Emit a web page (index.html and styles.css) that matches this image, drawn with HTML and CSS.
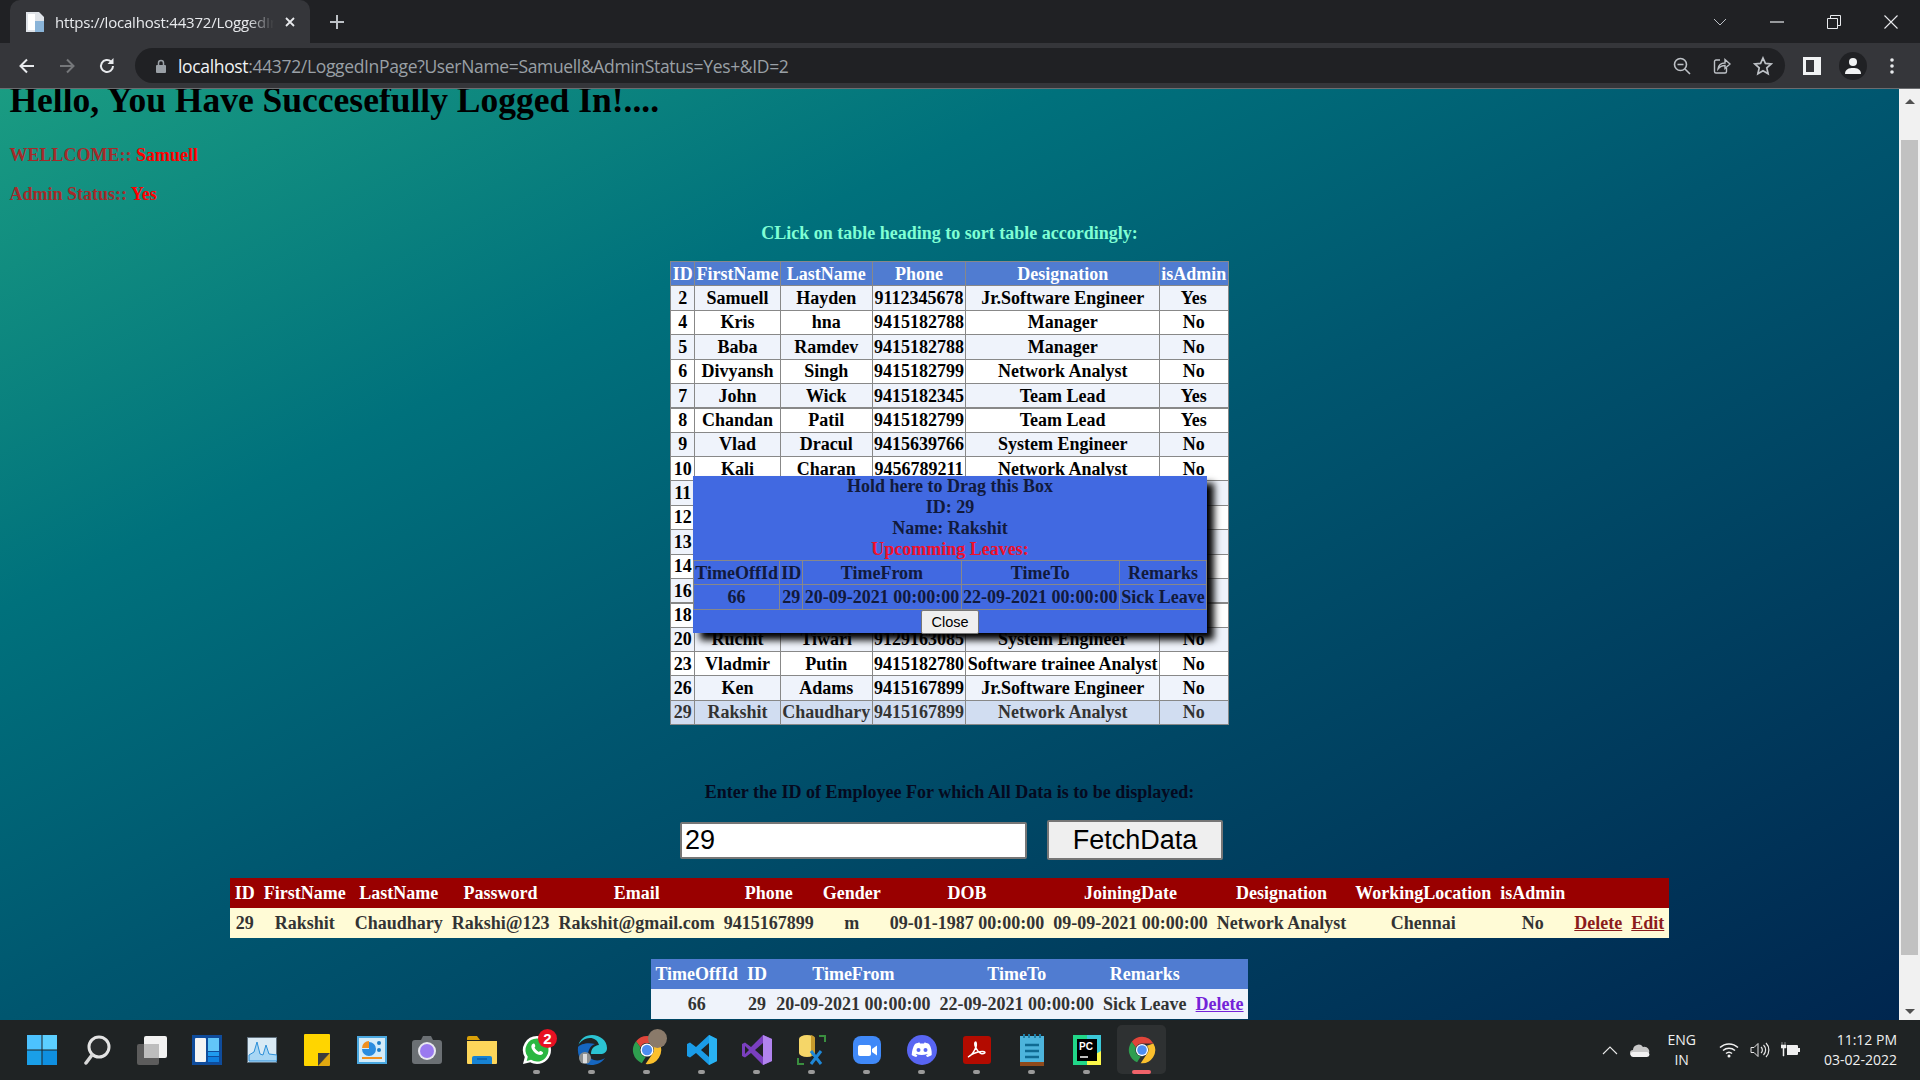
FILE: index.html
```html
<!DOCTYPE html>
<html lang="en">
<head>
  <meta charset="UTF-8" />
  <title>LoggedInPage</title>
  <link rel="stylesheet" href="styles.css">
</head>
<body>
  <svg class="defs" width="0" height="0">
    <symbol id="chrome" viewBox="0 0 32 32">
      <path d="M16 1a15 15 0 0 1 13 7.500H16a7.500 7.500 0 0 0-7 4.600L4.300 6.600A15 15 0 0 1 16 1z" fill="#e0453a"/>
      <path d="M4.300 6.600 9 13.100a7.500 7.500 0 0 0 5.600 10.300L10.400 30A15 15 0 0 1 4.300 6.600z" fill="#2e9e4f"/>
      <path d="M29 8.500A15 15 0 0 1 14.500 31L21.500 20.500A7.500 7.500 0 0 0 21.600 11z" fill="#fbc02d"/>
      <circle cx="16" cy="16" r="7" fill="#fff"/>
      <circle cx="16" cy="16" r="5.500" fill="#4d8df0"/>
    </symbol>
  </svg>

  <div class="tabstrip">
    <div class="tab">
      <svg class="favicon" width="20" height="20" viewBox="0 0 20 20"><path d="M1 0h13l5 5v15H1z" fill="#dfe3e8"/><path d="M10 9h9v11h-9z" fill="#8ab4d8"/><path d="M3 2h7v16H3z" fill="#fff"/></svg>
      <span class="tab-title">https://localhost:44372/LoggedInPage?UserName</span>
      <svg width="12" height="12" viewBox="0 0 12 12"><path d="M2 2l8 8M10 2l-8 8" stroke="#e8eaed" stroke-width="1.800"/></svg>
    </div>
    <svg class="newtab" width="14" height="14" viewBox="0 0 14 14"><path d="M7 0v14M0 7h14" stroke="#bdc1c6" stroke-width="2"/></svg>
    <div class="winbtns">
      <svg width="14" height="8" viewBox="0 0 14 8"><path d="M1 1l6 6 6-6" fill="none" stroke="#bdc1c6"/></svg>
      <svg width="14" height="2" viewBox="0 0 14 2"><path d="M0 1h14" stroke="#e8eaed" stroke-width="1.200"/></svg>
      <svg width="14" height="14" viewBox="0 0 14 14"><path d="M.5 3.500h10v10H.5zM3.500 3.500V.5h10v10h-3" fill="none" stroke="#e8eaed"/></svg>
      <svg width="14" height="14" viewBox="0 0 14 14"><path d="M.5.5l13 13M13.500.5l-13 13" stroke="#e8eaed" stroke-width="1.100"/></svg>
    </div>
  </div>

  <div class="toolbar">
    <svg class="navbtn" width="18" height="18" viewBox="0 0 18 18"><path d="M16 9H3M9 2.500L2.500 9 9 15.500" fill="none" stroke="#e8eaed" stroke-width="2"/></svg>
    <svg class="navbtn" width="18" height="18" viewBox="0 0 18 18"><path d="M2 9h13M9 2.500L15.500 9 9 15.500" fill="none" stroke="#75777a" stroke-width="2"/></svg>
    <svg class="navbtn" width="18" height="18" viewBox="0 0 18 18"><path d="M15 9a6 6 0 1 1-1.800-4.300" fill="none" stroke="#e8eaed" stroke-width="2"/><path d="M15.500 1v6h-6z" fill="#e8eaed"/></svg>
    <div class="omnibox">
      <svg width="12" height="14" viewBox="0 0 12 14"><rect x="1" y="6" width="10" height="8" rx="1" fill="#9aa0a6"/><path d="M3.500 6V4a2.500 2.500 0 0 1 5 0v2" fill="none" stroke="#9aa0a6" stroke-width="1.500"/></svg>
      <span class="url"><b>localhost</b>:44372/LoggedInPage?UserName=Samuell&amp;AdminStatus=Yes+&amp;ID=2</span>
      <svg class="push" width="18" height="18" viewBox="0 0 18 18"><circle cx="7.500" cy="7.500" r="6" fill="none" stroke="#bdc1c6" stroke-width="1.600"/><path d="M4.500 7.500h6M12 12l5 5" stroke="#bdc1c6" stroke-width="1.600"/></svg>
      <svg width="18" height="18" viewBox="0 0 18 18"><path d="M7 3H3a1.500 1.500 0 0 0-1.500 1.500v10A1.500 1.500 0 0 0 3 16h9a1.500 1.500 0 0 0 1.500-1.500V11" fill="none" stroke="#bdc1c6" stroke-width="1.400"/><path d="M5 12c.5-4 3-6 7-6V2.500L17 7l-5 4.500V8.500c-3 0-5 1-7 3.500z" fill="none" stroke="#bdc1c6" stroke-width="1.400"/></svg>
      <svg width="20" height="20" viewBox="0 0 20 20"><path d="M10 2l2.400 5.400 5.800.6-4.400 3.900 1.300 5.800L10 14.700l-5.100 3 1.300-5.800L1.800 8l5.800-.6z" fill="none" stroke="#bdc1c6" stroke-width="1.700"/></svg>
    </div>
    <svg class="sidepanel" width="18" height="18" viewBox="0 0 18 18"><path d="M0 0h18v18H0z" fill="#f1f3f4"/><path d="M3 3h8v12H3z" fill="#35363a"/></svg>
    <div class="profile"><svg width="18" height="18" viewBox="0 0 18 18"><circle cx="9" cy="5" r="4" fill="#f1f3f4"/><path d="M1 17c0-5 4-6 8-6s8 1 8 6z" fill="#f1f3f4"/></svg></div>
    <svg class="dots" width="4" height="16" viewBox="0 0 4 16"><circle cx="2" cy="2" r="1.800" fill="#e8eaed"/><circle cx="2" cy="8" r="1.800" fill="#e8eaed"/><circle cx="2" cy="14" r="1.800" fill="#e8eaed"/></svg>
  </div>

  <div class="viewport">
    <main class="page">
      <h1>Hello, You Have Succesefully Logged In!....</h1>
      <p class="status">WELLCOME:: <span>Samuell</span></p>
      <p class="status">Admin Status:: <span>Yes</span></p>
      <p class="hint">CLick on table heading to sort table accordingly:</p>

      <table class="grid employees">
        <thead>
          <tr><th>ID</th><th>FirstName</th><th>LastName</th><th>Phone</th><th>Designation</th><th>isAdmin</th></tr>
        </thead>
        <tbody>
          <tr><td>2</td><td>Samuell</td><td>Hayden</td><td>9112345678</td><td>Jr.Software Engineer</td><td>Yes</td></tr>
          <tr><td>4</td><td>Kris</td><td>hna</td><td>9415182788</td><td>Manager</td><td>No</td></tr>
          <tr><td>5</td><td>Baba</td><td>Ramdev</td><td>9415182788</td><td>Manager</td><td>No</td></tr>
          <tr><td>6</td><td>Divyansh</td><td>Singh</td><td>9415182799</td><td>Network Analyst</td><td>No</td></tr>
          <tr><td>7</td><td>John</td><td>Wick</td><td>9415182345</td><td>Team Lead</td><td>Yes</td></tr>
          <tr class="thick"><td>8</td><td>Chandan</td><td>Patil</td><td>9415182799</td><td>Team Lead</td><td>Yes</td></tr>
          <tr><td>9</td><td>Vlad</td><td>Dracul</td><td>9415639766</td><td>System Engineer</td><td>No</td></tr>
          <tr><td>10</td><td>Kali</td><td>Charan</td><td>9456789211</td><td>Network Analyst</td><td>No</td></tr>
          <tr><td>11</td><td></td><td></td><td></td><td></td><td></td></tr>
          <tr><td>12</td><td></td><td></td><td></td><td></td><td></td></tr>
          <tr><td>13</td><td></td><td></td><td></td><td></td><td></td></tr>
          <tr><td>14</td><td></td><td></td><td></td><td></td><td></td></tr>
          <tr><td>16</td><td></td><td></td><td></td><td></td><td></td></tr>
          <tr class="thick"><td>18</td><td></td><td></td><td></td><td></td><td></td></tr>
          <tr><td>20</td><td>Ruchit</td><td>Tiwari</td><td>9129163085</td><td>System Engineer</td><td>No</td></tr>
          <tr><td>23</td><td>Vladmir</td><td>Putin</td><td>9415182780</td><td>Software trainee Analyst</td><td>No</td></tr>
          <tr><td>26</td><td>Ken</td><td>Adams</td><td>9415167899</td><td>Jr.Software Engineer</td><td>No</td></tr>
          <tr class="selected"><td>29</td><td>Rakshit</td><td>Chaudhary</td><td>9415167899</td><td>Network Analyst</td><td>No</td></tr>
        </tbody>
      </table>

      <p class="enter">Enter the ID of Employee For which All Data is to be displayed:</p>
      <div class="fetch">
        <input class="fetch-input" type="text" value="29">
        <button class="fetch-btn">FetchData</button>
      </div>

      <table class="plain detail">
        <thead>
          <tr><th>ID</th><th>FirstName</th><th>LastName</th><th>Password</th><th>Email</th><th>Phone</th><th>Gender</th><th>DOB</th><th>JoiningDate</th><th>Designation</th><th>WorkingLocation</th><th>isAdmin</th><th></th><th></th></tr>
        </thead>
        <tbody>
          <tr><td>29</td><td>Rakshit</td><td>Chaudhary</td><td>Rakshi@123</td><td>Rakshit@gmail.com</td><td>9415167899</td><td>m</td><td>09-01-1987 00:00:00</td><td>09-09-2021 00:00:00</td><td>Network Analyst</td><td>Chennai</td><td>No</td><td><a href="#">Delete</a></td><td><a href="#">Edit</a></td></tr>
        </tbody>
      </table>

      <table class="plain leaves">
        <thead>
          <tr><th>TimeOffId</th><th>ID</th><th>TimeFrom</th><th>TimeTo</th><th>Remarks</th><th></th></tr>
        </thead>
        <tbody>
          <tr><td>66</td><td>29</td><td>20-09-2021 00:00:00</td><td>22-09-2021 00:00:00</td><td>Sick Leave</td><td><a href="#">Delete</a></td></tr>
        </tbody>
      </table>

      <div class="popup">
        <div class="popup-line">Hold here to Drag this Box</div>
        <div class="popup-line">ID: 29</div>
        <div class="popup-line">Name: Rakshit</div>
        <div class="popup-line popup-red">Upcomming Leaves:</div>
        <table class="grid popup-table">
          <tr><th>TimeOffId</th><th>ID</th><th>TimeFrom</th><th>TimeTo</th><th>Remarks</th></tr>
          <tr><td>66</td><td>29</td><td>20-09-2021 00:00:00</td><td>22-09-2021 00:00:00</td><td>Sick Leave</td></tr>
        </table>
        <button class="popup-close">Close</button>
      </div>
    </main>

    <div class="scrollbar">
      <svg class="arrow" width="10" height="5" viewBox="0 0 10 5"><path d="M5 0l5 5H0z" fill="#505050"/></svg>
      <div class="thumb"></div>
      <svg class="arrow" width="10" height="5" viewBox="0 0 10 5"><path d="M0 0h10L5 5z" fill="#505050"/></svg>
    </div>
  </div>

  <footer class="taskbar">
    <div class="apps">
      <div class="app"><svg width="30" height="30" viewBox="0 0 30 30"><path d="M0 0h14.500v14.500H0z" fill="#4cc2ff"/><path d="M15.500 0H30v14.500H15.500z" fill="#5ccfff"/><path d="M0 15.500h14.500V30H0z" fill="#1a9fe8"/><path d="M15.500 15.500H30V30H15.500z" fill="#0f8fe0"/></svg></div>
      <div class="app"><svg width="28" height="30" viewBox="0 0 28 30"><circle cx="16" cy="12" r="10" fill="#2a2d2e" stroke="#e4e4e4" stroke-width="3"/><path d="M9 20l-6 8" stroke="#d8d8d8" stroke-width="3.500" stroke-linecap="round"/></svg></div>
      <div class="app"><svg width="30" height="30" viewBox="0 0 30 30"><rect x="0" y="9" width="22" height="21" rx="2" fill="#5c5c5c"/><rect x="7" y="1" width="23" height="22" rx="2" fill="#f2f2f2"/><rect x="7" y="9" width="15" height="14" fill="#bdbdbd"/></svg></div>
      <div class="app"><svg width="30" height="30" viewBox="0 0 30 30"><path d="M0 0h30v30H0z" fill="#0f4c9c"/><rect x="3" y="3" width="11" height="24" rx="1" fill="#f4f4f4"/><path d="M16 3h11v13H16z" fill="#62c6f8"/><path d="M16 17h11v4H16z" fill="#1f9bf0"/><path d="M16 22h11v5H16z" fill="#0f80e0"/></svg></div>
      <div class="app"><svg width="30" height="26" viewBox="0 0 30 26"><path d="M0 0h30v26H0z" fill="#5f6f7c"/><path d="M1 1h28v24H1z" fill="#d9eaf5"/><path d="M2 18l5-3 3-10 3 12 3 1 3-10 3 9 8 1v6H2z" fill="#a8d6f4" stroke="#2d8fd8"/></svg></div>
      <div class="app"><svg width="26" height="32" viewBox="0 0 26 32"><path d="M1 0h24a1 1 0 0 1 1 1v18L14 32H1a1 1 0 0 1-1-1V1a1 1 0 0 1 1-1z" fill="#ffd500"/><path d="M14 32V19h12z" fill="#3d3d3d"/><path d="M14 32l12-13v12a1 1 0 0 1-1 1z" fill="#e0a810"/></svg></div>
      <div class="app"><svg width="30" height="28" viewBox="0 0 30 28"><path d="M0 0h30v28H0z" fill="#4aa8e0"/><path d="M2 2h26v24H2z" fill="#d4ecfa"/><path d="M5 12a7 7 0 0 1 7-7v7z" fill="#f09020"/><path d="M12 6a7 7 0 1 1-7 7h7z" fill="#2a8ce0"/><circle cx="22" cy="7" r="2" fill="#1a7cc8"/><circle cx="22" cy="14" r="2" fill="#1a7cc8"/><path d="M5 22h20" stroke="#f09020" stroke-width="2"/></svg></div>
      <div class="app"><svg width="30" height="28" viewBox="0 0 30 28"><path d="M3 4h6l2-4h8l2 4h6a3 3 0 0 1 3 3v18a3 3 0 0 1-3 3H3a3 3 0 0 1-3-3V7a3 3 0 0 1 3-3z" fill="#6b7074"/><circle cx="15" cy="15" r="9" fill="#e8e8f0"/><circle cx="15" cy="15" r="7" fill="#9a7af0"/></svg></div>
      <div class="app"><svg width="30" height="28" viewBox="0 0 30 28"><path d="M0 2a2 2 0 0 1 2-2h8l3 4H0z" fill="#d9a008"/><path d="M0 5h30v22a1 1 0 0 1-1 1H1a1 1 0 0 1-1-1z" fill="#fdd65a"/><path d="M5 28v-6a2 2 0 0 1 2-2h16a2 2 0 0 1 2 2v6z" fill="#1783d4"/><path d="M10 23h10" stroke="#0b5ea8" stroke-width="1.500"/></svg></div>
      <div class="app running">
        <svg width="30" height="30" viewBox="0 0 30 30"><path d="M15 1a14 14 0 0 1 0 28c-2.500 0-4.700-.6-6.700-1.700L1 29l1.800-7A14 14 0 0 1 15 1z" fill="#fff"/><path d="M15 3.500a11.500 11.500 0 0 1 0 23 11.500 11.500 0 0 1-6-1.700l-4.300 1.100 1.100-4.100A11.500 11.500 0 0 1 15 3.500z" fill="#2bb741"/><path d="M10.500 9c1-1 2-.5 2.500.8.500 1.500.3 2-.5 2.800.8 1.700 2.500 3.400 4.400 4.300.8-.8 1.400-1.100 2.800-.5 1.300.5 1.900 1.500.9 2.500-1.800 2-5.300 1.100-8.300-1.700C9.300 14 8.400 10.900 10.500 9z" fill="#fff"/></svg>
        <span class="badge">2</span>
      </div>
      <div class="app running">
        <svg width="30" height="30" viewBox="0 0 30 30"><path d="M15 0c8 0 15 5.500 15 13 0 4-3 6-6.500 6H14c0-5 3-8.500 8-9C20.500 5 17 3 13 3 7 3 3 7 1.500 10 3 4 8.500 0 15 0z" fill="#2bc3d2"/><path d="M1 12C0 20 4 30 14 30c6 0 11-2.500 14-7-3 2-7 3-11 2-5-1.500-7-6-5-10 1-3 3-5 6-6-7-2-15 0-17 3z" fill="#1566c0"/><circle cx="8" cy="23" r="6" fill="#8b8f90"/><rect x="6" y="19" width="4" height="9" fill="#ddd"/></svg>
      </div>
      <div class="app running">
        <svg width="30" height="30"><use href="#chrome"/></svg>
        <span class="avatar"></span>
      </div>
      <div class="app running"><svg width="30" height="30" viewBox="0 0 30 30"><path d="M22 0l8 4v22l-8 4L9 18l-6 4.500L0 21v-12l3-1.500L9 12zM22 8l-8 7 8 7z" fill="#1a9ce8"/><path d="M22 0l8 4v22l-8 4z" fill="#29b2f2"/></svg></div>
      <div class="app running"><svg width="30" height="30" viewBox="0 0 30 30"><path d="M21 0l9 4v22l-9 4L9 18l-6 4.500L0 21v-12l3-1.500L9 12z" fill="#7a3fbf"/><path d="M21 0l9 4v22l-9 4z" fill="#b184ee"/><path d="M21 8l-8 7 8 7z" fill="#1f2324"/><path d="M3 11l4 4-4 4z" fill="#1f2324"/></svg></div>
      <div class="app running"><svg width="30" height="32" viewBox="0 0 30 32"><path d="M2 5a8 4 0 0 1 16 0v14a8 4 0 0 1-16 0z" fill="#f5d668"/><path d="M14 1a8 4 0 0 1 4 4v14a8 4 0 0 1-4 3z" fill="#c79a2c"/><path d="M22 2h6v6M1 24v6h6" fill="none" stroke="#3a8f3f" stroke-width="2"/><path d="M14 30l10-13M24 30L14 17" stroke="#1f88d8" stroke-width="3"/></svg></div>
      <div class="app running"><svg width="28" height="28" viewBox="0 0 28 28"><rect width="28" height="28" rx="8" fill="#4089f8"/><rect x="5" y="9" width="13" height="11" rx="2" fill="#fff"/><path d="M19 13l5-3.500v10L19 16z" fill="#fff"/></svg></div>
      <div class="app running"><svg width="30" height="30" viewBox="0 0 30 30"><circle cx="15" cy="15" r="15" fill="#5865f2"/><path d="M8 9c2-1 4-1.500 4.500-1.500l.5 1h4l.5-1c.5 0 2.500.5 4.500 1.500 2 3 3 6.500 2.700 11-1.500 1-3 1.800-4.700 2l-1-1.800 1.800-.9-.6-.4c-3.500 1.500-7.500 1.500-11 0l-.6.400 1.800.9-1 1.800c-1.700-.2-3.200-1-4.700-2C5 15.500 6 12 8 9z" fill="#fff"/><circle cx="11.500" cy="15" r="2" fill="#5865f2"/><circle cx="18.500" cy="15" r="2" fill="#5865f2"/></svg></div>
      <div class="app running"><svg width="28" height="28" viewBox="0 0 28 28"><rect width="28" height="28" rx="3" fill="#b30b00"/><path d="M5 21c3-1 6-5 8-10 .5-2 .5-5-.5-5s-1 3 0 5c1.500 3 4 6 5.500 6.500 2 .5 4 0 4-1s-3-1.500-7-.5c-3 .7-6 2-8 3.500-1 1-1.500 1.500-2 1.500z" fill="none" stroke="#fff" stroke-width="1.500"/></svg></div>
      <div class="app running"><svg width="24" height="32" viewBox="0 0 24 32"><path d="M0 2h24v26H0z" fill="#4db4dc"/><path d="M0 28h24v4H0z" fill="#8f4a1c"/><path d="M4 0v4M9 0v4M15 0v4M20 0v4" stroke="#1f7fa8" stroke-width="2"/><path d="M5 11h14M5 17h14M5 23h14" stroke="#0f6a92" stroke-width="2.500"/></svg></div>
      <div class="app running"><svg width="28" height="30" viewBox="0 0 28 30"><path d="M0 0h28v30H0z" fill="#21d789"/><path d="M14 0h14v30H14z" fill="#3bc8d8"/><path d="M14 24l14-8v14H14z" fill="#fcf84a"/><path d="M4 4h20v22H4z" fill="#000"/><text class="pc" x="6" y="15">PC</text><path d="M7 22h8" stroke="#fff" stroke-width="1.500"/></svg></div>
      <div class="app active"><svg width="28" height="28"><use href="#chrome"/></svg></div>
    </div>

    <div class="tray">
      <svg width="16" height="9" viewBox="0 0 16 9"><path d="M1 8l7-7 7 7" fill="none" stroke="#e8e8e8" stroke-width="1.100"/></svg>
      <svg class="cloud" width="20" height="14" viewBox="0 0 20 14"><path d="M3 13a3 3 0 0 1 0-6 5.500 5.500 0 0 1 10-3 4 4 0 0 1 3 9z" fill="#c8c8c8"/><path d="M3 14a2.500 2.500 0 0 1 0-5h14a2.500 2.500 0 0 1 0 5z" fill="#f2f2f2"/></svg>
      <div class="lang"><div>ENG</div><div>IN</div></div>
      <div class="tray-icons">
        <svg width="20" height="16" viewBox="0 0 20 16"><path d="M1 5.500a13 13 0 0 1 18 0M4 8.500a9 9 0 0 1 12 0M7 11.500a4.500 4.500 0 0 1 6 0" fill="none" stroke="#f0f0f0" stroke-width="1.500"/><circle cx="10" cy="14" r="1.500" fill="#f0f0f0"/></svg>
        <svg width="20" height="16" viewBox="0 0 20 16"><path d="M1 5.500h3l4-4v13l-4-4H1z" fill="none" stroke="#e8e8e8"/><path d="M11 5a4 4 0 0 1 0 6M13.500 3a7 7 0 0 1 0 10M16 1a10 10 0 0 1 0 14" fill="none" stroke="#e8e8e8" stroke-width="1.200"/></svg>
        <svg width="20" height="16" viewBox="0 0 20 16"><path d="M6 3h10a1 1 0 0 1 1 1v8a1 1 0 0 1-1 1H6z" fill="#f0f0f0"/><path d="M17 6h2v4h-2z" fill="#f0f0f0"/><path d="M1 0v3M4 0v3M0 3h5v3H3v8H2V6H0z" fill="#f0f0f0" stroke="#f0f0f0" stroke-width=".5"/></svg>
      </div>
      <div class="clock"><div>11:12 PM</div><div>03-02-2022</div></div>
    </div>
  </footer>
</body>
</html>
```

FILE: styles.css
```css
* {
  box-sizing: border-box;
}

body {
  margin: 0;
  height: 100vh;
  display: flex;
  flex-direction: column;
  overflow: hidden;
  background: #202124;
}

.defs {
  position: absolute;
}

/* browser chrome */
.tabstrip {
  height: 43px;
  flex: none;
  display: flex;
  align-items: center;
  background: #202124;
}

.tab {
  width: 300px;
  height: 43px;
  margin-left: 10px;
  padding: 0 14px 0 15px;
  display: flex;
  align-items: center;
  gap: 10px;
  background: #35363a;
  border-radius: 10px 10px 0 0;
}

.tab-title {
  flex: 1;
  overflow: hidden;
  white-space: nowrap;
  color: #e8eaed;
  font: 15px "Open Sans", sans-serif;
  letter-spacing: -0.2px;
  -webkit-mask-image: linear-gradient(to right, #000 88%, transparent);
  mask-image: linear-gradient(to right, #000 88%, transparent);
}

.newtab {
  margin-left: 20px;
}

.winbtns {
  margin-left: auto;
  margin-right: 22px;
  display: flex;
  align-items: center;
  gap: 43px;
}

.toolbar {
  height: 46px;
  flex: none;
  display: flex;
  align-items: center;
  background: #35363a;
  border-bottom: 1px solid #6b6d70;
  padding-left: 18px;
}

.navbtn {
  margin-right: 22px;
}

.omnibox {
  width: 1650px;
  height: 35px;
  margin-left: -3px;
  padding: 0 12px 0 20px;
  display: flex;
  align-items: center;
  gap: 22px;
  background: #202124;
  border-radius: 18px;
}

.url {
  margin-left: -11px;
  color: #9aa0a6;
  font: 17.500px "Open Sans", sans-serif;
  letter-spacing: -0.34px;
}

.url b {
  color: #f1f3f4;
  font-weight: 400;
}

.push {
  margin-left: auto;
}

.sidepanel {
  margin-left: 18px;
}

.profile {
  width: 28px;
  height: 28px;
  margin-left: 18px;
  display: flex;
  align-items: center;
  justify-content: center;
  background: #202124;
  border-radius: 50%;
}

.dots {
  margin-left: 23px;
}

/* page */
.viewport {
  flex: 1;
  min-height: 0;
  display: flex;
}

.page {
  flex: 1;
  position: relative;
  overflow: hidden;
  padding: 0 8px;
  background: linear-gradient(to bottom right, #1a9c82 0%, #00717c 28%, #00566f 50%, #00264f 100%);
  font-family: "Liberation Serif", "Times New Roman", serif;
  font-size: 18px;
  font-weight: 700;
}

h1 {
  margin: -7px 0 0 1.500px;
  font-size: 35.500px;
  line-height: 37px;
}

.status {
  margin: 27px 0 0 1.500px;
  line-height: 18px;
  color: #a52a2a;
}

.status + .status {
  margin-top: 21px;
}

.status span {
  color: #f00;
}

.hint {
  margin: 21px 0 19px;
  line-height: 18px;
  text-align: center;
  color: #7fffd4;
}

.enter {
  margin: 58px 0 0;
  line-height: 18px;
  text-align: center;
  color: #050a20;
}

.grid {
  border-collapse: collapse;
  text-align: center;
  white-space: nowrap;
}

.grid th,
.grid td {
  border: 1px solid #888;
  padding: 2.700px 1.400px;
  line-height: 18px;
}

.employees {
  margin: 0 auto;
  color: #000;
}

.employees th {
  background: #507cd1;
  color: #fff;
}

.employees tbody tr:nth-child(odd) {
  background: #eff3fb;
}

.employees tbody tr:nth-child(even) {
  background: #fff;
}

.employees tbody tr.selected {
  background: #d1ddf1;
  color: #333;
}

.employees tr.thick td {
  box-shadow: inset 0 1px 0 #888;
}

.fetch {
  margin-top: 19px;
  padding-left: 4px;
  display: flex;
  justify-content: center;
  align-items: center;
  gap: 20px;
}

.fetch-input {
  width: 347px;
  height: 37px;
  padding: 1px 3px;
  border: 2px solid #767676;
  border-radius: 2px;
  background: #fff;
  font: 27px "Liberation Sans", Arial, sans-serif;
  color: #000;
}

.fetch-btn {
  width: 176px;
  height: 40px;
  padding: 0;
  border: 2px solid #767676;
  border-radius: 2px;
  background: #efefef;
  font: 27px "Liberation Sans", Arial, sans-serif;
  color: #000;
}

.plain {
  margin: 0 auto;
  border-collapse: collapse;
  text-align: center;
  white-space: nowrap;
  color: #333;
}

.plain th,
.plain td {
  padding: 6px 4.500px;
  line-height: 18px;
}

.plain th {
  color: #fff;
}

.detail {
  margin-top: 18px;
}

.detail th {
  background: #900;
}

.detail td {
  background: #fffbd6;
}

.detail a {
  color: #8b1c1c;
}

.leaves {
  margin-top: 21px;
}

.leaves th {
  background: #507cd1;
}

.leaves td {
  background: #eff3fb;
}

.leaves a {
  color: #7422d8;
}

/* draggable leave box */
.popup {
  position: absolute;
  left: 693px;
  top: 387px;
  width: 514px;
  height: 157px;
  background: #4169e1;
  box-shadow: 7px 7px 7px #000;
  color: #111a3c;
  text-align: center;
}

.popup-line {
  line-height: 21px;
}

.popup-red {
  color: #f0102a;
}

.popup-table {
  width: 100%;
}

.popup-table th,
.popup-table td {
  padding-left: 1px;
  padding-right: 1px;
}

.popup-close {
  width: 58px;
  height: 24px;
  padding: 0;
  border: 1px solid #767676;
  border-radius: 2px;
  background: #efefef;
  font: 14.500px "Liberation Sans", Arial, sans-serif;
  color: #000;
}

.scrollbar {
  width: 21px;
  flex: none;
  position: relative;
  display: flex;
  flex-direction: column;
  align-items: center;
  justify-content: space-between;
  padding: 10px 0 6px;
  background: #f1f1f1;
}

.thumb {
  position: absolute;
  top: 51px;
  left: 2px;
  width: 17px;
  height: 815px;
  background: #c1c1c1;
}

/* windows taskbar */
.taskbar {
  height: 60px;
  flex: none;
  display: flex;
  align-items: center;
  justify-content: space-between;
  background: #1f2324;
  color: #f0f0f0;
  font: 14px "Open Sans", sans-serif;
}

.apps {
  display: flex;
  padding-left: 14px;
}

.app {
  position: relative;
  width: 55px;
  height: 60px;
  display: flex;
  align-items: center;
  justify-content: center;
}

.app.running::after {
  content: "";
  position: absolute;
  left: 24px;
  bottom: 6px;
  width: 7px;
  height: 4px;
  border-radius: 2px;
  background: #9a9a9a;
}

.app.active::before {
  content: "";
  position: absolute;
  top: 5px;
  bottom: 6px;
  left: 3px;
  right: 3px;
  border-radius: 5px;
  background: #2e3132;
}

.app.active::after {
  content: "";
  position: absolute;
  left: 18px;
  bottom: 6px;
  width: 19px;
  height: 4px;
  border-radius: 2px;
  background: #f0636a;
}

.app.active svg {
  position: relative;
}

.badge {
  position: absolute;
  top: 9px;
  left: 29px;
  width: 19px;
  height: 19px;
  border-radius: 50%;
  background: #e81123;
  color: #fff;
  font: 700 15px/19px "Liberation Sans", Arial, sans-serif;
  text-align: center;
}

.avatar {
  position: absolute;
  top: 9px;
  left: 29px;
  width: 19px;
  height: 19px;
  border-radius: 50%;
  background: #8a7a6a;
}

.pc {
  font: 700 10px "Liberation Sans", Arial, sans-serif;
  fill: #fff;
}

.tray {
  display: flex;
  align-items: center;
  padding-right: 23px;
}

.cloud {
  margin-left: 12px;
}

.lang {
  margin-left: 17px;
  text-align: center;
  line-height: 20px;
}

.tray-icons {
  display: flex;
  gap: 11px;
  margin-left: 23px;
}

.clock {
  margin-left: 23px;
  text-align: right;
  line-height: 20px;
}
```
